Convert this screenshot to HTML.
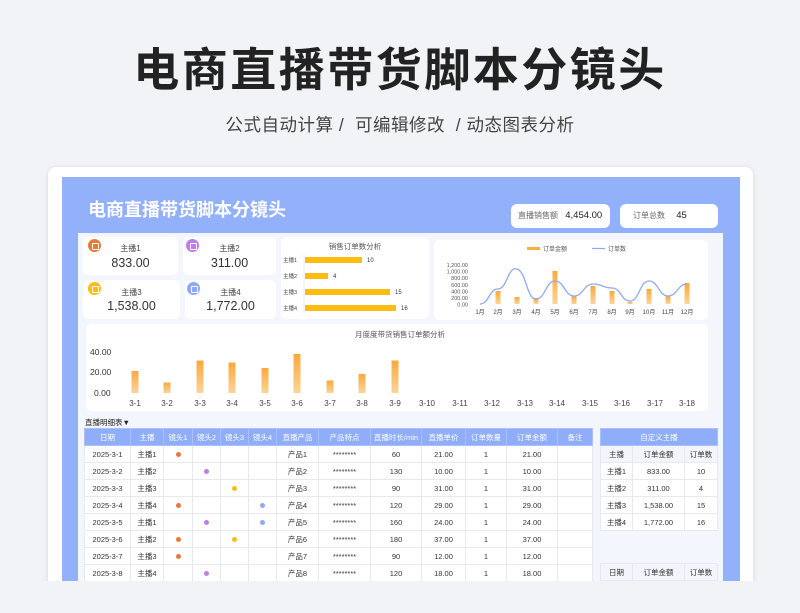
<!DOCTYPE html>
<html><head><meta charset="utf-8"><style>
*{margin:0;padding:0;box-sizing:border-box}
body{width:800px;height:613px;background:#f1f3f6;font-family:"Liberation Sans","Noto Sans CJK SC",sans-serif;position:relative;overflow:hidden;color:#333}
.a{position:absolute}
.card{background:#fff;border-radius:6px}
table{border-collapse:collapse;font-size:7.5px;color:#333;table-layout:fixed}
td,th{border:1px solid #e6e9f0;text-align:center;height:17px;padding:0;white-space:nowrap;overflow:hidden}
th{background:#8fadf9;color:#fff;font-weight:normal;border-color:#a9c0fb}
tbody td{background:#fff}
.dot{display:inline-block;width:5px;height:5px;border-radius:50%}
.ic{position:absolute;width:13px;height:13px;border-radius:50%}
.ic::after{content:"";position:absolute;left:4px;top:4px;width:5px;height:5px;border:1px solid #fff;border-radius:1px}
.kn{font-size:8px;color:#444;position:absolute;width:100%;text-align:center}
.kv{font-size:12.5px;color:#333;position:absolute;width:100%;text-align:center}
</style></head><body>
<div class="a" style="left:0;top:34px;width:800px;text-align:center;font-size:46px;font-weight:bold;color:#222;letter-spacing:2.5px">电商直播带货脚本分镜头</div>
<div class="a" style="left:0;top:112px;width:800px;text-align:center;font-size:17.5px;color:#444;letter-spacing:.5px">公式自动计算 /&nbsp; 可编辑修改&nbsp; / 动态图表分析</div>

<div class="a" style="left:48px;top:167px;width:705px;height:420px;background:#fff;border-radius:8px;box-shadow:0 1px 6px rgba(0,0,0,.12)"></div>
<div class="a" style="left:62px;top:177px;width:678px;height:410px;background:#93b0fb"></div>
<div class="a" style="left:78px;top:233px;width:645px;height:354px;background:#f4f6fd"></div>
<div class="a" style="left:88px;top:196px;font-size:18px;font-weight:bold;color:#fff">电商直播带货脚本分镜头</div>
<div class="a card" style="left:511px;top:204px;width:99px;height:24px;font-size:8px;color:#666;line-height:24px;padding-left:7px">直播销售额 <b style="font-size:9.5px;color:#222;margin-left:5px;font-weight:normal">4,454.00</b></div>
<div class="a card" style="left:620px;top:204px;width:98px;height:24px;font-size:8px;color:#666;line-height:24px;padding-left:13px">订单总数 <span style="font-size:9.5px;color:#222;margin-left:9px">45</span></div>

<div class="a card" style="left:83px;top:237px;width:95px;height:38px"><div class="ic" style="left:5px;top:2px;background:#e8793a"></div><div class="kn" style="top:6px">主播1</div><div class="kv" style="top:19px">833.00</div></div>
<div class="a card" style="left:183px;top:237px;width:93px;height:38px"><div class="ic" style="left:3px;top:2px;background:#c07ce8"></div><div class="kn" style="top:6px">主播2</div><div class="kv" style="top:19px">311.00</div></div>
<div class="a card" style="left:83px;top:280px;width:97px;height:39px"><div class="ic" style="left:5px;top:2px;background:#f9bd13"></div><div class="kn" style="top:7px">主播3</div><div class="kv" style="top:19px">1,538.00</div></div>
<div class="a card" style="left:185px;top:280px;width:91px;height:39px"><div class="ic" style="left:2px;top:2px;background:#8eaaf6"></div><div class="kn" style="top:7px">主播4</div><div class="kv" style="top:19px">1,772.00</div></div>

<div class="a card" style="left:281px;top:237px;width:148px;height:82px"></div>
<svg class="a" style="left:0;top:0" width="800" height="613">
<g font-family="Liberation Sans,Noto Sans CJK SC,sans-serif">
<text x="355" y="249" font-size="7.5" fill="#555" text-anchor="middle">销售订单数分析</text>
<line x1="304" y1="253" x2="304" y2="315" stroke="#ddd" stroke-width=".5"/>
<g font-size="5.5" fill="#444"><text x="283" y="262">主播1</text><text x="283" y="278">主播2</text><text x="283" y="294">主播3</text><text x="283" y="310">主播4</text></g>
<g fill="#fbbd0f"><rect x="305" y="257" width="57" height="6"/><rect x="305" y="273" width="23" height="6"/><rect x="305" y="289" width="85" height="6"/><rect x="305" y="305" width="91" height="6"/></g>
<g font-size="6" fill="#333"><text x="367" y="262">10</text><text x="333" y="278">4</text><text x="395" y="294">15</text><text x="401" y="310">16</text></g>

<rect x="434" y="240" width="274" height="80" rx="6" fill="#fff"/>
<rect x="527" y="247" width="13" height="3" fill="#f9b04a"/><text x="543" y="251" font-size="6" fill="#555">订单金额</text>
<line x1="592" y1="248.5" x2="605" y2="248.5" stroke="#8eaaf4" stroke-width="1.2"/><text x="608" y="251" font-size="6" fill="#555">订单数</text>
<g font-size="5.5" fill="#555" text-anchor="end"><text x="468" y="267">1,200.00</text><text x="468" y="273.5">1,000.00</text><text x="468" y="280">800.00</text><text x="468" y="287">600.00</text><text x="468" y="293.5">400.00</text><text x="468" y="300">200.00</text><text x="468" y="306.5">0.00</text></g>
<defs><linearGradient id="g" x1="0" y1="0" x2="0" y2="1"><stop offset="0" stop-color="#f9a93b"/><stop offset="1" stop-color="#fbd49a"/></linearGradient></defs>
<g fill="url(#g)"><rect x="495.5" y="291" width="5" height="13"/><rect x="514.5" y="297" width="5" height="7"/><rect x="533.5" y="298" width="5" height="6"/><rect x="552.5" y="271" width="5" height="33"/><rect x="571.5" y="296" width="5" height="8"/><rect x="590.5" y="286" width="5" height="18"/><rect x="609.5" y="291" width="5" height="13"/><rect x="627.5" y="302" width="5" height="2"/><rect x="646.5" y="289" width="5" height="15"/><rect x="665.5" y="296" width="5" height="8"/><rect x="684.5" y="283" width="5" height="21"/></g>
<path d="M480 304 C489 304 489 289 498 289 C507.5 289 507.5 266 517 269 C526.5 272 526.5 299 536 299 C545.5 299 545.5 281 555 281 C564.5 281 564.5 296 574 296 C583.5 296 583.5 284 593 284 C602.5 284 602.5 288 612 288 C621 288 621 301 630 301 C639.5 301 639.5 281 649 281 C658.5 281 658.5 296 668 296 C677.5 296 677.5 284 687 284" fill="none" stroke="#8eaaf4" stroke-width="1.3"/>
<g font-size="6" fill="#444" text-anchor="middle"><text x="480" y="314">1月</text><text x="498" y="314">2月</text><text x="517" y="314">3月</text><text x="536" y="314">4月</text><text x="555" y="314">5月</text><text x="574" y="314">6月</text><text x="593" y="314">7月</text><text x="612" y="314">8月</text><text x="630" y="314">9月</text><text x="649" y="314">10月</text><text x="668" y="314">11月</text><text x="687" y="314">12月</text></g>

<rect x="86" y="324" width="622" height="87" rx="6" fill="#fff"/>
<text x="400" y="337" font-size="7.5" fill="#555" text-anchor="middle">月度度带货销售订单额分析</text>
<g font-size="8.5" fill="#333"><text x="90" y="355">40.00</text><text x="90" y="375">20.00</text><text x="94" y="396">0.00</text></g>
<g fill="url(#g)"><rect x="131.5" y="371" width="7" height="22"/><rect x="163.5" y="382.5" width="7" height="10.5"/><rect x="196.5" y="360.5" width="7" height="32.5"/><rect x="228.5" y="362.5" width="7" height="30.5"/><rect x="261.5" y="368" width="7" height="25"/><rect x="293.5" y="354" width="7" height="39"/><rect x="326.5" y="380.5" width="7" height="12.5"/><rect x="358.5" y="374" width="7" height="19"/><rect x="391.5" y="360.5" width="7" height="32.5"/></g>
<g font-size="8" fill="#444" text-anchor="middle"><text x="135" y="406">3-1</text><text x="167" y="406">3-2</text><text x="200" y="406">3-3</text><text x="232" y="406">3-4</text><text x="265" y="406">3-5</text><text x="297" y="406">3-6</text><text x="330" y="406">3-7</text><text x="362" y="406">3-8</text><text x="395" y="406">3-9</text><text x="427" y="406">3-10</text><text x="460" y="406">3-11</text><text x="492" y="406">3-12</text><text x="525" y="406">3-13</text><text x="557" y="406">3-14</text><text x="590" y="406">3-15</text><text x="622" y="406">3-16</text><text x="655" y="406">3-17</text><text x="687" y="406">3-18</text></g>
</g></svg>

<div class="a" style="left:85px;top:417px;font-size:7.5px;color:#222">直播明细表▼</div>
<table class="a" style="left:84px;top:428px;width:508px">
<colgroup><col style="width:46px"><col style="width:33px"><col style="width:29px"><col style="width:28px"><col style="width:28px"><col style="width:28px"><col style="width:42px"><col style="width:52px"><col style="width:51px"><col style="width:44px"><col style="width:41px"><col style="width:51px"><col style="width:35px"></colgroup>
<thead><tr><th>日期</th><th>主播</th><th>镜头1</th><th>镜头2</th><th>镜头3</th><th>镜头4</th><th>直播产品</th><th>产品特点</th><th>直播时长/min</th><th>直播单价</th><th>订单数量</th><th>订单金额</th><th>备注</th></tr></thead>
<tbody>
<tr><td>2025-3-1</td><td>主播1</td><td><span class="dot" style="background:#e8793a"></span></td><td></td><td></td><td></td><td>产品1</td><td>********</td><td>60</td><td>21.00</td><td>1</td><td>21.00</td><td></td></tr>
<tr><td>2025-3-2</td><td>主播2</td><td></td><td><span class="dot" style="background:#c07ce8"></span></td><td></td><td></td><td>产品2</td><td>********</td><td>130</td><td>10.00</td><td>1</td><td>10.00</td><td></td></tr>
<tr><td>2025-3-3</td><td>主播3</td><td></td><td></td><td><span class="dot" style="background:#f9bd13"></span></td><td></td><td>产品3</td><td>********</td><td>90</td><td>31.00</td><td>1</td><td>31.00</td><td></td></tr>
<tr><td>2025-3-4</td><td>主播4</td><td><span class="dot" style="background:#e8793a"></span></td><td></td><td></td><td><span class="dot" style="background:#8eaaf6"></span></td><td>产品4</td><td>********</td><td>120</td><td>29.00</td><td>1</td><td>29.00</td><td></td></tr>
<tr><td>2025-3-5</td><td>主播1</td><td></td><td><span class="dot" style="background:#c07ce8"></span></td><td></td><td><span class="dot" style="background:#8eaaf6"></span></td><td>产品5</td><td>********</td><td>160</td><td>24.00</td><td>1</td><td>24.00</td><td></td></tr>
<tr><td>2025-3-6</td><td>主播2</td><td><span class="dot" style="background:#e8793a"></span></td><td></td><td><span class="dot" style="background:#f9bd13"></span></td><td></td><td>产品6</td><td>********</td><td>180</td><td>37.00</td><td>1</td><td>37.00</td><td></td></tr>
<tr><td>2025-3-7</td><td>主播3</td><td><span class="dot" style="background:#e8793a"></span></td><td></td><td></td><td></td><td>产品7</td><td>********</td><td>90</td><td>12.00</td><td>1</td><td>12.00</td><td></td></tr>
<tr><td>2025-3-8</td><td>主播4</td><td></td><td><span class="dot" style="background:#c07ce8"></span></td><td></td><td></td><td>产品8</td><td>********</td><td>120</td><td>18.00</td><td>1</td><td>18.00</td><td></td></tr>
</tbody></table>

<table class="a" style="left:600px;top:428px;width:117px">
<colgroup><col style="width:32px"><col style="width:52px"><col style="width:33px"></colgroup>
<thead><tr><th colspan="3">自定义主播</th></tr></thead>
<tbody>
<tr><td style="background:#f3f5fa">主播</td><td style="background:#f3f5fa">订单金额</td><td style="background:#f3f5fa">订单数</td></tr>
<tr><td>主播1</td><td>833.00</td><td>10</td></tr>
<tr><td>主播2</td><td>311.00</td><td>4</td></tr>
<tr><td>主播3</td><td>1,538.00</td><td>15</td></tr>
<tr><td>主播4</td><td>1,772.00</td><td>16</td></tr>
</tbody></table>
<table class="a" style="left:600px;top:563px;width:117px">
<colgroup><col style="width:32px"><col style="width:52px"><col style="width:33px"></colgroup>
<tbody><tr><td style="background:#f3f5fa">日期</td><td style="background:#f3f5fa">订单金额</td><td style="background:#f3f5fa">订单数</td></tr></tbody></table>
<div class="a" style="left:0;top:581px;width:800px;height:32px;background:#f1f3f6"></div>
</body></html>
